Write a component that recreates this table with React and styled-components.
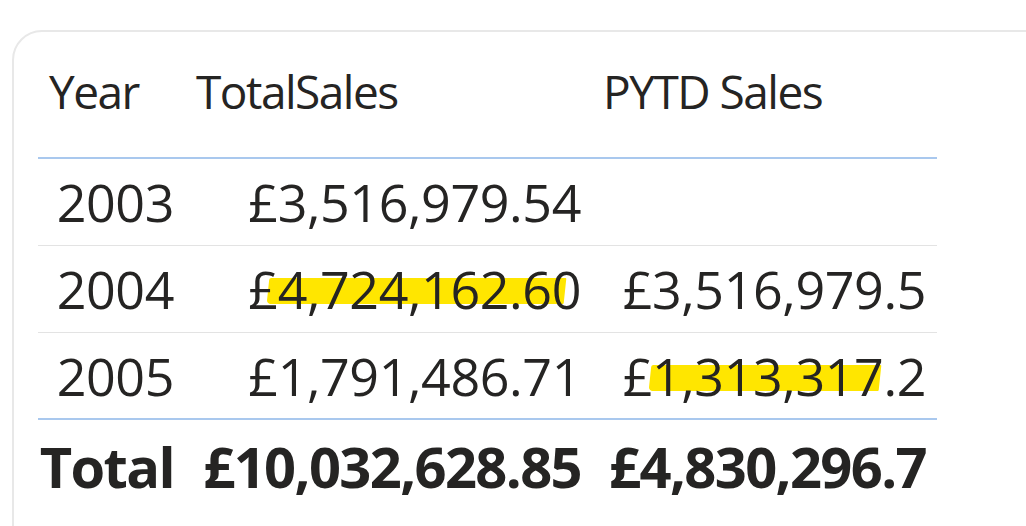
import React from "react"
import styled, { createGlobalStyle } from "styled-components"

const GlobalStyle = createGlobalStyle`
    html, body {
        margin: 0;
        padding: 0;
        background: #ffffff;
        overflow: hidden;
    }
    body {
        font-family: "Open Sans", "Noto Sans", sans-serif;
        color: #252423;
    }
`;

const Page = styled.div`
    width: 1026px;
    height: 526px;
    padding: 30px 0 0 12px;
    box-sizing: border-box;
    overflow: hidden;
`;

const Card = styled.div`
    width: 1100px;
    height: 560px;
    border: 2px solid #e8e8e8;
    border-radius: 30px;
    box-sizing: border-box;
    padding: 0 0 0 24px;
`;

const Table = styled.div`
    display: grid;
    grid-template-columns: 147px 407px 345px;
    width: 899px;
`;

const HeadCell = styled.div`
    box-sizing: border-box;
    height: 127px;
    padding: 0 11px 7px;
    display: flex;
    align-items: center;
    font-size: 46px;
    letter-spacing: -1.5px;
    line-height: 1;
    white-space: nowrap;
    border-bottom: 2px solid #a9c8ee;
`;

const Cell = styled.div`
    position: relative;
    box-sizing: border-box;
    height: 87px;
    padding: 0 11px;
    display: flex;
    align-items: center;
    justify-content: flex-end;
    font-size: 52px;
    letter-spacing: -0.4px;
    line-height: 1;
    white-space: nowrap;
    overflow: hidden;
    border-bottom: ${p => (p.$last ? "2px solid #a9c8ee" : "1px solid #e3e3e3")};
`;

const Value = styled.span`
    position: relative;
    z-index: 1;
`;

const Mark = styled.span`
    position: absolute;
    top: 32px;
    height: 26px;
    left: ${p => p.$left}px;
    width: ${p => p.$width}px;
    background: #ffe600;
    border-radius: 2px 1px 1px 4px;
    transform: skewX(-6deg);
`;

const TotalCell = styled.div`
    box-sizing: border-box;
    height: 92px;
    padding: 0 11px;
    display: flex;
    align-items: center;
    justify-content: flex-end;
    font-weight: 700;
    font-size: 56px;
    letter-spacing: -1.6px;
    line-height: 1;
    white-space: nowrap;
    overflow: hidden;
`;

const rows = [
    { year: "2003", sales: "£3,516,979.54", pytd: "" },
    { year: "2004", sales: "£4,724,162.60", pytd: "£3,516,979.5", salesMark: { left: 83, width: 297 } },
    { year: "2005", sales: "£1,791,486.71", pytd: "£1,313,317.2", pytdMark: { left: 58, width: 230 } },
]

function App() {
    return (
        <Page>
            <GlobalStyle />
            <Card>
                <Table>
                    <HeadCell>Year</HeadCell>
                    <HeadCell>TotalSales</HeadCell>
                    <HeadCell>PYTD Sales</HeadCell>

                    {rows.map((r, i) => {
                        const last = i === rows.length - 1
                        return (
                            <React.Fragment key={r.year}>
                                <Cell $last={last}><Value>{r.year}</Value></Cell>
                                <Cell $last={last}>
                                    {r.salesMark && <Mark $left={r.salesMark.left} $width={r.salesMark.width} />}
                                    <Value>{r.sales}</Value>
                                </Cell>
                                <Cell $last={last}>
                                    {r.pytdMark && <Mark $left={r.pytdMark.left} $width={r.pytdMark.width} />}
                                    <Value>{r.pytd}</Value>
                                </Cell>
                            </React.Fragment>
                        )
                    })}

                    <TotalCell>Total</TotalCell>
                    <TotalCell>£10,032,628.85</TotalCell>
                    <TotalCell>£4,830,296.7</TotalCell>
                </Table>
            </Card>
        </Page>
    )
}

export default App
